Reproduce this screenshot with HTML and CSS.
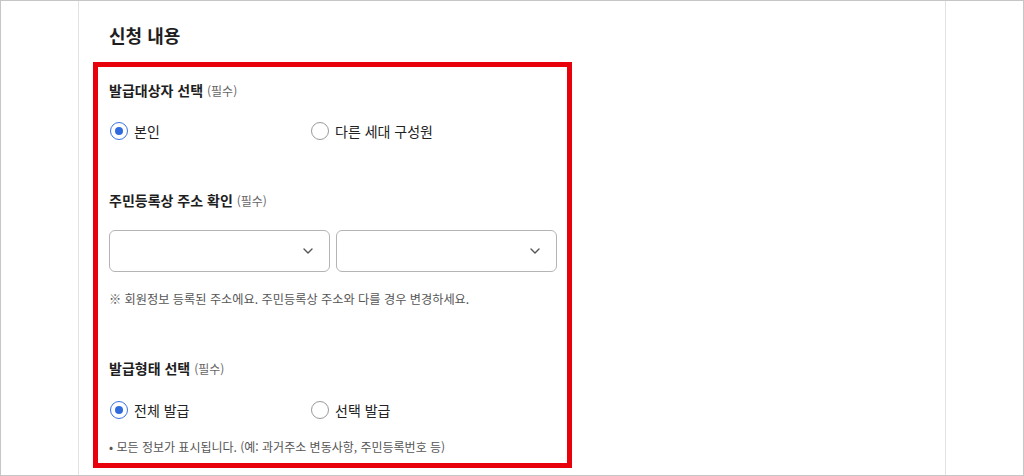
FILE: index.html
```html
<!DOCTYPE html>
<html lang="ko">
<head>
<meta charset="utf-8">
<title>신청 내용</title>
<link rel="stylesheet" href="styles.css">
</head>
<body>
<div class="frame">
  <div class="column">
    <h2 class="title">신청 내용</h2>
    <div class="highlight">
      <div class="field">
        <div class="label">발급대상자 선택 <span class="req">(필수)</span></div>
        <div class="radios">
          <label class="radio"><span class="dot on"></span><span>본인</span></label>
          <label class="radio"><span class="dot"></span><span>다른 세대 구성원</span></label>
        </div>
      </div>
      <div class="field">
        <div class="label">주민등록상 주소 확인 <span class="req">(필수)</span></div>
        <div class="selects">
          <div class="select"><svg class="chev" width="10" height="6" viewBox="0 0 10 6"><path d="M1 1 L5 5 L9 1" fill="none" stroke="#555" stroke-width="1.4" stroke-linecap="round" stroke-linejoin="round"/></svg></div>
          <div class="select"><svg class="chev" width="10" height="6" viewBox="0 0 10 6"><path d="M1 1 L5 5 L9 1" fill="none" stroke="#555" stroke-width="1.4" stroke-linecap="round" stroke-linejoin="round"/></svg></div>
        </div>
        <p class="note">※ 회원정보 등록된 주소에요. 주민등록상 주소와 다를 경우 변경하세요.</p>
      </div>
      <div class="field">
        <div class="label">발급형태 선택 <span class="req">(필수)</span></div>
        <div class="radios second">
          <label class="radio"><span class="dot on"></span><span>전체 발급</span></label>
          <label class="radio"><span class="dot"></span><span>선택 발급</span></label>
        </div>
        <p class="note small">• 모든 정보가 표시됩니다. (예: 과거주소 변동사항, 주민등록번호 등)</p>
      </div>
    </div>
  </div>
</div>
</body>
</html>
```
FILE: styles.css
```css
* { box-sizing: border-box; }
html, body {
  margin: 0;
  padding: 0;
  background: #fff;
}
body {
  font-family: "Noto Sans CJK KR", "Noto Sans", sans-serif;
  color: #222;
}
.frame {
  width: 1024px;
  height: 476px;
  border: 1px solid #c6c6c6;
  overflow: hidden;
  padding-left: 77px;
}
.column {
  width: 868px;
  height: 100%;
  border-left: 1px solid #e2e2e2;
  border-right: 1px solid #e2e2e2;
  padding: 20px 0 0 14px;
}
.title {
  margin: 0 0 13px 16px;
  font-size: 18px;
  line-height: 28px;
  font-weight: 700;
  color: #1e1e1e;
}
.highlight {
  width: 479px;
  height: 406px;
  border: 5px solid #e8000b;
  padding: 13px 10px 0 11px;
}
.field + .field { margin-top: 49px; }
.label {
  font-size: 14px;
  line-height: 20px;
  font-weight: 700;
  color: #1e1e1e;
}
.req {
  font-size: 12px;
  font-weight: 400;
  color: #666;
}
.radios {
  display: grid;
  grid-template-columns: 201px 1fr;
  margin-top: 20px;
}
.radios.second { margin-top: 21px; }
.radio {
  display: flex;
  align-items: center;
  gap: 6px;
  font-size: 14px;
  line-height: 20px;
  color: #222;
}
.dot {
  width: 18px;
  height: 18px;
  border-radius: 50%;
  border: 1px solid #9a9a9a;
  display: flex;
  align-items: center;
  justify-content: center;
  margin-left: 1px;
}
.dot.on {
  border: 1.5px solid #3a72e0;
}
.dot.on::after {
  content: "";
  width: 8px;
  height: 8px;
  border-radius: 50%;
  background: #2f6bdc;
}
.selects {
  display: flex;
  gap: 6px;
  margin-top: 19px;
}
.select {
  width: 221px;
  height: 42px;
  border: 1px solid #b4b4b4;
  border-radius: 6px;
  display: flex;
  align-items: center;
  justify-content: flex-end;
  padding-right: 16px;
}
.note {
  margin: 17px 0 0;
  font-size: 12.2px;
  line-height: 20px;
  color: #555;
}
.note.small {
  font-size: 12px;
}
```
